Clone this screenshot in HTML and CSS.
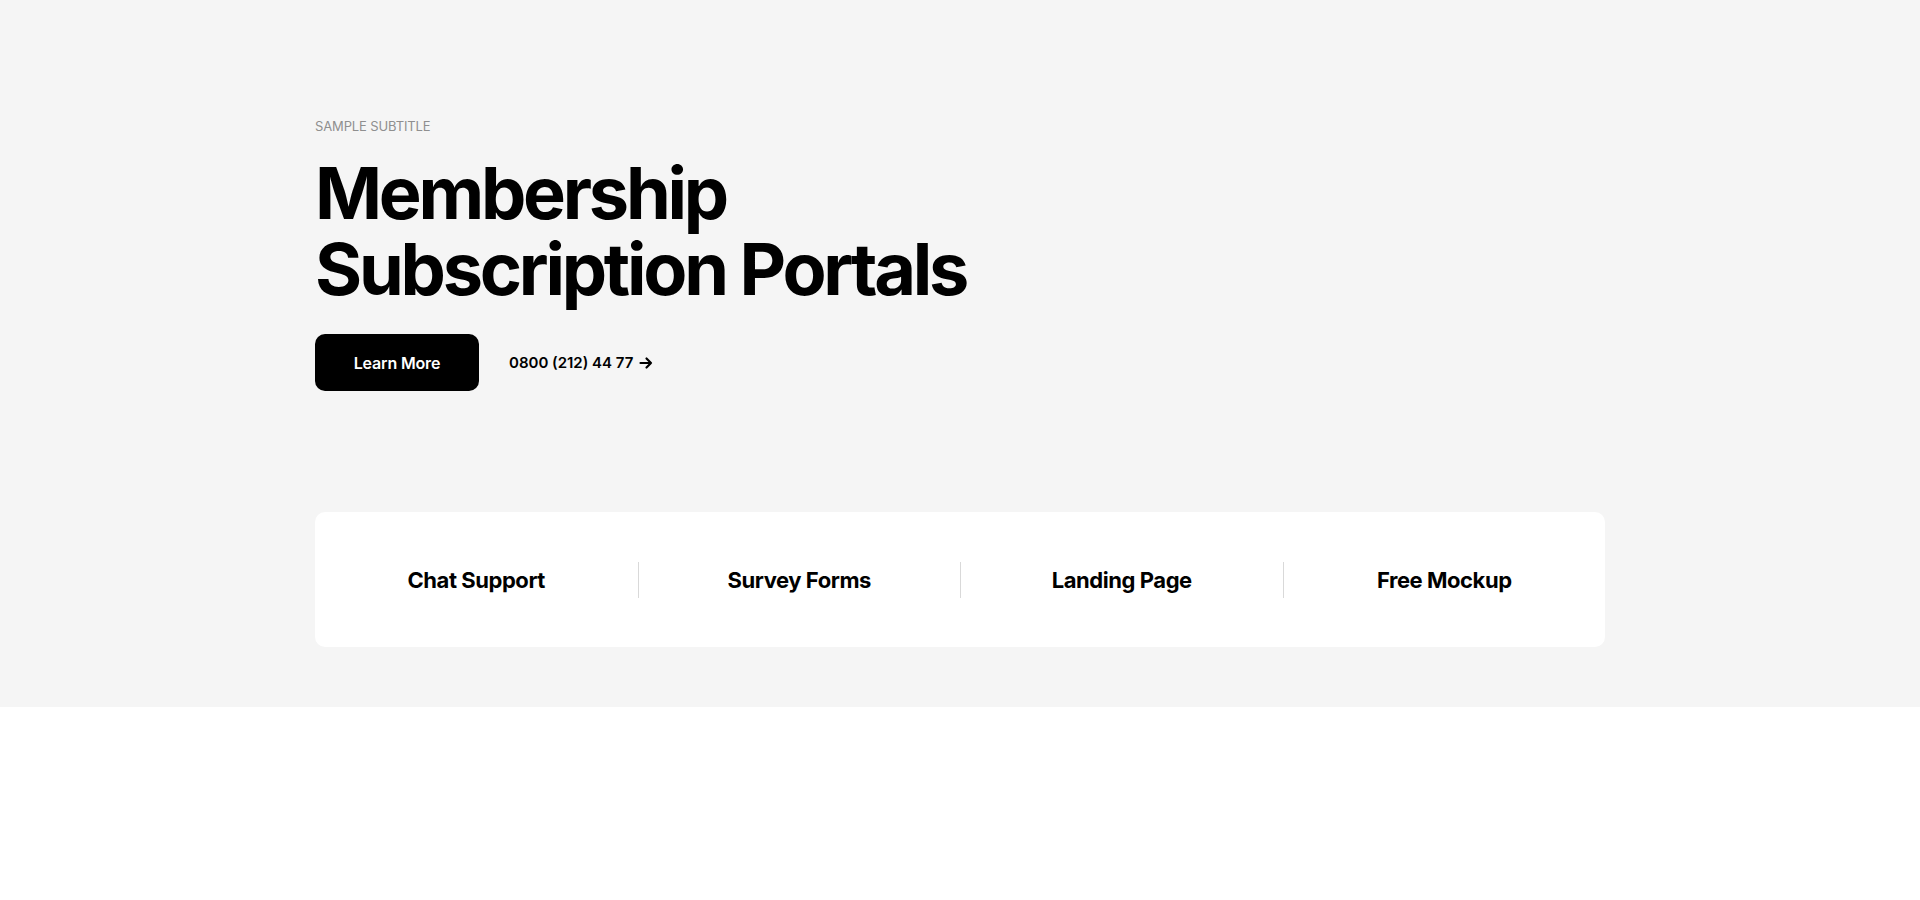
FILE: index.html
```html
<!DOCTYPE html>
<html>

<head>
    <meta charset="UTF-8">
    <title>Membership Subscription Portals</title>
    <link rel="stylesheet" href="styles.css">
</head>

<body>
    <section class="hero">
        <div class="container">
            <p class="subtitle">SAMPLE SUBTITLE</p>
            <h1 class="title">Membership<br>Subscription Portals</h1>
            <div class="actions">
                <a class="btn" href="#">Learn More</a>
                <a class="phone" href="#">0800 (212) 44 77
                    <svg width="14" height="14" viewBox="0 0 14 14" fill="none" stroke="currentColor"
                        stroke-width="2.2" stroke-linecap="round" stroke-linejoin="round">
                        <path d="M1.5 7h10.5M7.5 2.5L12 7l-4.5 4.5" />
                    </svg>
                </a>
            </div>

            <ul class="features">
                <li>Chat Support</li>
                <li>Survey Forms</li>
                <li>Landing Page</li>
                <li>Free Mockup</li>
            </ul>
        </div>
    </section>
</body>

</html>
```

FILE: styles.css
```css
body {
    margin: 0;
    font-family: Inter, "Noto Sans", sans-serif;
    color: #000;
    background: #fff;
}

.hero {
    background: #f5f5f5;
    padding: 117px 0 60px;
}

.container {
    max-width: 1290px;
    margin: 0 auto;
}

.subtitle {
    margin: 0;
    font-size: 13px;
    line-height: 18px;
    color: #8f8f8f;
    letter-spacing: -0.01em;
}

.title {
    margin: 20px 0 0;
    font-size: 72px;
    line-height: 76px;
    font-weight: 700;
    letter-spacing: -0.045em;
}

.actions {
    display: flex;
    align-items: center;
    gap: 30px;
    margin-top: 27px;
}

.btn {
    display: flex;
    align-items: center;
    justify-content: center;
    width: 164px;
    height: 57px;
    border-radius: 10px;
    background: #000;
    color: #fff;
    font-size: 16px;
    font-weight: 600;
    text-decoration: none;
    letter-spacing: -0.01em;
}

.phone {
    display: flex;
    align-items: center;
    gap: 6px;
    color: #000;
    font-size: 15px;
    font-weight: 600;
    text-decoration: none;
}

.features {
    list-style-type: none;
    margin: 121px 0 0;
    padding: 0;
    display: grid;
    grid-template-columns: repeat(4, 1fr);
    align-items: center;
    height: 135px;
    background: #fff;
    border-radius: 10px;
}

.features>li {
    display: flex;
    align-items: center;
    justify-content: center;
    height: 36px;
    font-size: 22px;
    font-weight: 700;
    letter-spacing: -0.02em;
    border-left: 1px solid #d9d9d9;
}

.features>li:first-child {
    border-left: none;
}
```
